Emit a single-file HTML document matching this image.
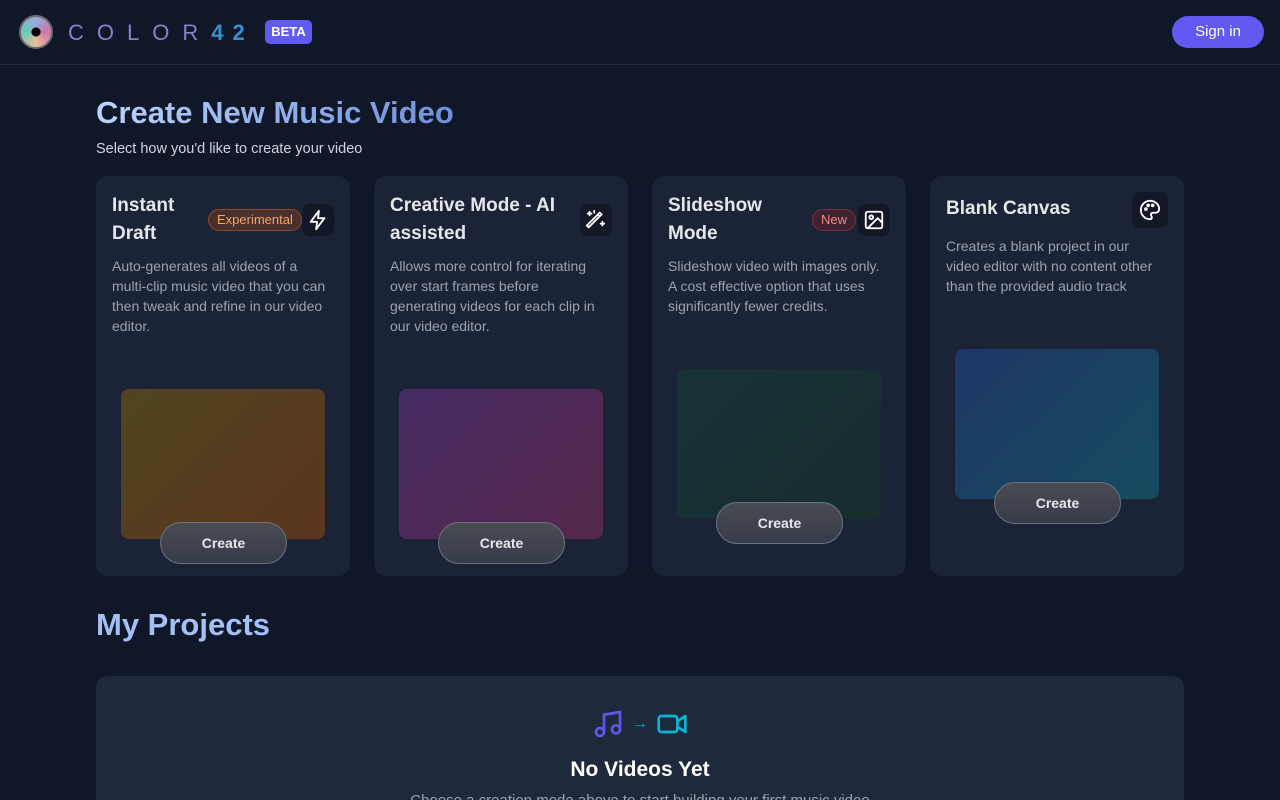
<!DOCTYPE html>
<html><head><meta charset="utf-8"><style>
*{box-sizing:border-box;margin:0;padding:0}
html,body{width:1280px;height:800px;overflow:hidden}
body{background:#0f1729;font-family:"Liberation Sans",sans-serif;color:#e5e7eb;position:relative}
header{height:65px;border-bottom:1px solid #1f2937;position:relative}
.logo{position:absolute;left:19px;top:15px;width:34px;height:34px;border-radius:50%;border:2px solid #6b6b6b;background:radial-gradient(circle at 50% 50%,#000 0 4px,transparent 5px),conic-gradient(#9ad 0,#c7a 90deg,#eb9 180deg,#6cb 270deg,#9ad 360deg)}
.brand{position:absolute;left:68px;top:20px;font-size:22px;letter-spacing:13px;color:#8a7fc8;font-weight:normal}
.brand b{color:#3b8fd0;letter-spacing:9px}
.beta{position:absolute;left:265px;top:20px;width:47px;height:24px;border-radius:5px;background:#6159f0;color:#fff;font-size:13px;font-weight:bold;text-align:center;line-height:24px}
.sign{position:absolute;left:1172px;top:16px;width:92px;height:32px;border-radius:16px;background:#6359f0;color:#fff;font-size:15px;text-align:center;line-height:32px}
h1{position:absolute;left:96px;top:95px;font-size:31px;font-weight:bold;background:linear-gradient(90deg,#bcd3fb,#6f8fd9);-webkit-background-clip:text;color:transparent}
.sub{position:absolute;left:96px;top:141px;font-size:14.5px;color:#cbd5e1}
.card{position:absolute;top:176px;width:254px;height:400px;background:#1b2336;border-radius:12px;padding:16px}
.ct{font-size:19px;font-weight:bold;line-height:28px;color:#e5e7eb;width:180px}
.ic{position:absolute;right:16px;top:28px;width:32px;height:32px;border-radius:8px;background:#121826;display:flex;align-items:center;justify-content:center}
.badge{position:absolute;top:33px;height:22px;border-radius:11px;font-size:13px;line-height:20px;padding:0 8px}
.d{position:absolute;left:16px;font-size:14px;line-height:20px;color:#9ca3af;width:214px}
.pv{position:absolute;left:25px;width:204px;height:150px;border-radius:8px}
.btn{position:absolute;left:64px;width:127px;height:42px;border-radius:21px;border:1px solid #6b7280;background:linear-gradient(#4b4b52,#363c4b);color:#e5e7eb;font-size:14px;font-weight:bold;text-align:center;line-height:40px}
h2{position:absolute;left:96px;top:607px;font-size:31px;font-weight:bold;color:#a5c0f5}
.empty{position:absolute;left:96px;top:676px;width:1088px;height:124px;background:#1e293b;border-radius:12px 12px 0 0;text-align:center;overflow:hidden}
</style></head><body>
<header><div class="logo"></div><div class="brand">COLOR<b>42</b></div><div class="beta">BETA</div><div class="sign">Sign in</div></header>
<h1>Create New Music Video</h1>
<div class="sub">Select how you'd like to create your video</div>

<div class="card" style="left:96px"><div class="ct" style="width:90px">Instant Draft</div>
<div class="badge" style="left:112px;border:1px solid #8a4b2c;background:#4a2f2a;color:#f0a96a">Experimental</div>
<div class="ic"><svg width="22" height="22" viewBox="0 0 24 24" fill="none" stroke="#fff" stroke-width="2" stroke-linejoin="round"><path d="M13 2L4 14h7l-1 8 9-12h-7z"/></svg></div>
<div class="d" style="top:80px">Auto-generates all videos of a multi-clip music video that you can then tweak and refine in our video editor.</div>
<div class="pv" style="top:213px;background:linear-gradient(135deg,#50451f,#5b3520)"></div>
<div class="btn" style="top:346px">Create</div></div>

<div class="card" style="left:374px"><div class="ct" style="width:200px">Creative Mode - AI assisted</div>
<div class="ic"><svg width="22" height="22" viewBox="0 0 24 24" fill="none" stroke="#fff" stroke-width="2" stroke-linecap="round"><path d="M4 20L18 6l-2-2L2 18zM14 6l2 2M5 3v4M3 5h4M19 14v4M17 16h4M10 2v2"/></svg></div>
<div class="d" style="top:80px">Allows more control for iterating over start frames before generating videos for each clip in our video editor.</div>
<div class="pv" style="top:213px;background:linear-gradient(135deg,#462b63,#55284a)"></div>
<div class="btn" style="top:346px">Create</div></div>

<div class="card" style="left:652px"><div class="ct" style="width:110px">Slideshow Mode</div>
<div class="badge" style="left:160px;border:1px solid #7a2f3a;background:#3e2230;color:#f08a8a">New</div>
<div class="ic"><svg width="22" height="22" viewBox="0 0 24 24" fill="none" stroke="#fff" stroke-width="2"><rect x="3" y="3" width="18" height="18" rx="2"/><circle cx="9" cy="9" r="2"/><path d="M21 15l-5-5L5 21"/></svg></div>
<div class="d" style="top:80px;width:222px">Slideshow video with images only. A cost effective option that uses significantly fewer credits.</div>
<div class="pv" style="top:193px;background:linear-gradient(135deg,#173236,#172d2e)"></div>
<div class="btn" style="top:326px">Create</div></div>

<div class="card" style="left:930px"><div class="ct" style="margin-top:3px">Blank Canvas</div>
<div class="ic" style="top:16px;width:36px;height:36px"><svg width="22" height="22" viewBox="0 0 24 24" fill="none" stroke="#fff" stroke-width="2"><path d="M12 2a10 10 0 000 20c1.5 0 2-1 2-2 0-1.5-1-1.5-1-3s1-2 2.5-2H18a4 4 0 004-4c0-5-4.5-9-10-9z"/><circle cx="7.5" cy="11" r="1"/><circle cx="10" cy="7" r="1"/><circle cx="15" cy="7" r="1"/></svg></div>
<div class="d" style="top:60px">Creates a blank project in our video editor with no content other than the provided audio track</div>
<div class="pv" style="top:173px;background:linear-gradient(135deg,#1e3766,#164b5e)"></div>
<div class="btn" style="top:306px">Create</div></div>

<h2>My Projects</h2>
<div class="empty">
<div style="margin-top:32px;display:flex;justify-content:center;align-items:center;gap:8px">
<svg width="32" height="32" viewBox="0 0 24 24" fill="none" stroke="#6057e8" stroke-width="2"><path d="M9 18V5l12-2v13"/><circle cx="6" cy="18" r="3"/><circle cx="18" cy="16" r="3"/></svg>
<span style="color:#06b6d4;font-size:16px">→</span>
<svg width="32" height="32" viewBox="0 0 24 24" fill="none" stroke="#06b6d4" stroke-width="2" stroke-linejoin="round"><rect x="2" y="6" width="14" height="12" rx="2"/><path d="M16 10l6-4v12l-6-4z"/></svg>
</div>
<div style="margin-top:18px;font-size:21px;font-weight:bold;color:#fff">No Videos Yet</div>
<div style="margin-top:10px;font-size:15px;color:#9ca3af">Choose a creation mode above to start building your first music video</div>
</div>
</body></html>
